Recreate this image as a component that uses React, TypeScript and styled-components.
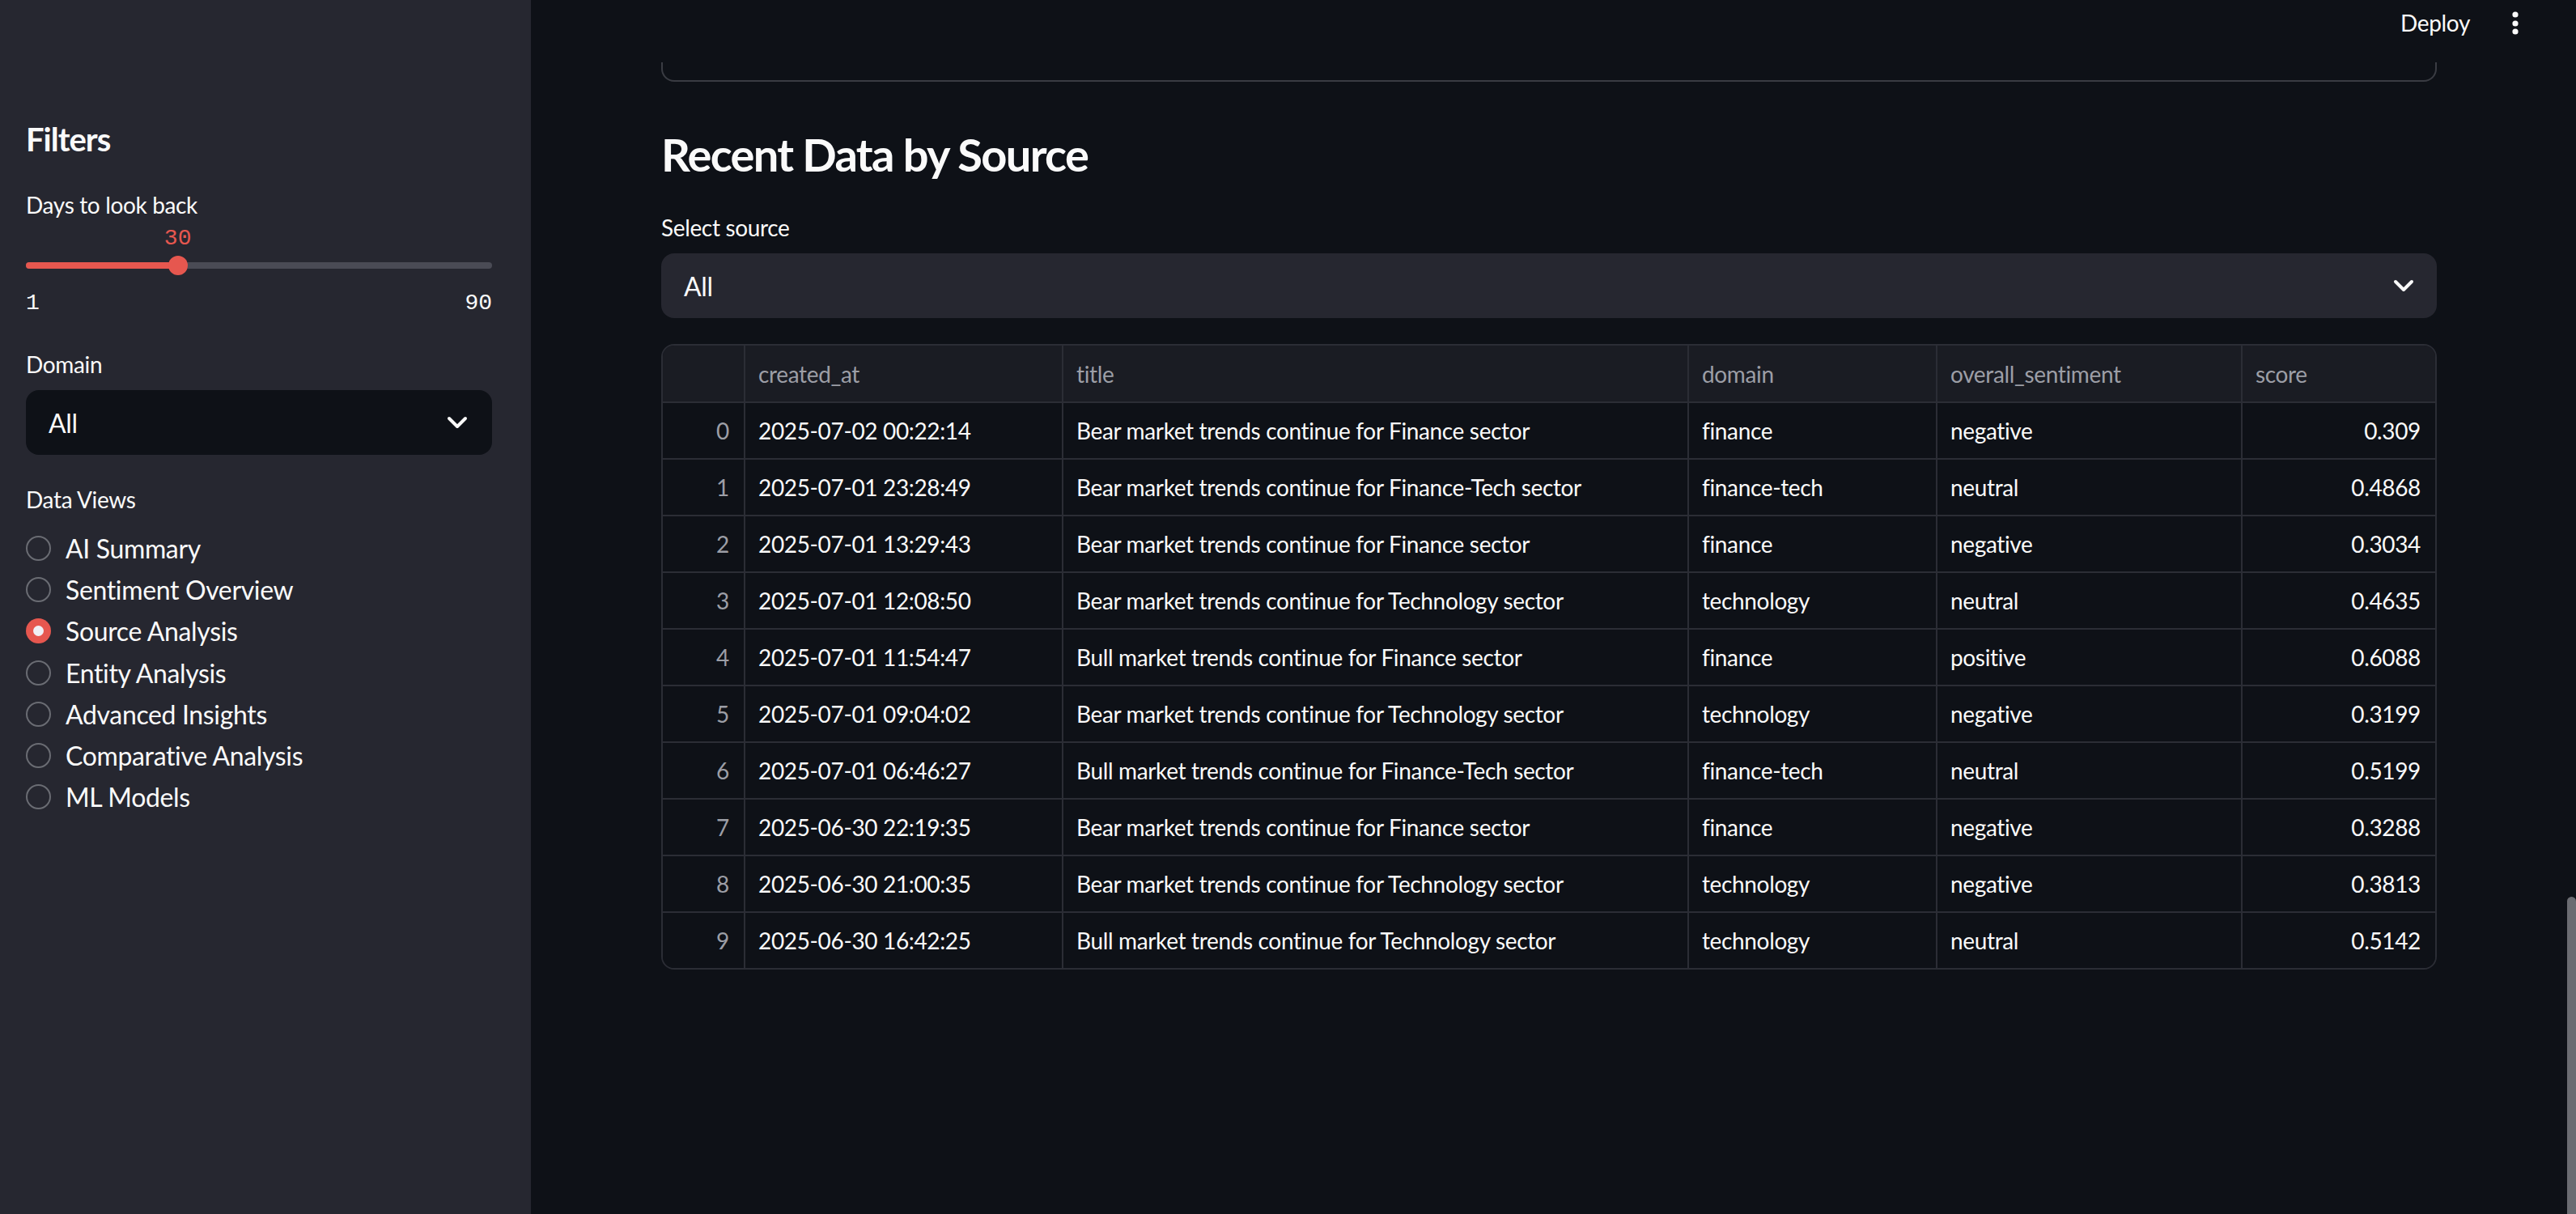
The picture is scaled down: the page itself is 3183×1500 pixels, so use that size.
import React from "react";
import styled, { createGlobalStyle } from "styled-components";

const GlobalStyle = createGlobalStyle`
  html, body { margin: 0; padding: 0; background: #0e1117; }
  body { font-family: Lato, "Noto Sans", sans-serif; color: #fafafa; letter-spacing: -0.022em; }
  * { box-sizing: border-box; }
`;

const Page = styled.div`
  display: flex;
  width: 3183px;
  height: 1500px;
  overflow: hidden;
  position: relative;
  background: #0e1117;
`;

const Sidebar = styled.aside`
  width: 656px;
  flex-shrink: 0;
  background: #262730;
  padding: 148px 48px 0 32px;
  display: flex;
  flex-direction: column;
`;

const SideTitle = styled.h2`
  margin: 0;
  font-size: 40px;
  line-height: 48px;
  font-weight: 700;
  letter-spacing: -0.025em;
  color: #fafafa;
`;

const Label = styled.div<{ $mt: number }>`
  margin-top: ${(p) => p.$mt}px;
  font-size: 28px;
  line-height: 40px;
  color: #fafafa;
`;

const SliderWrap = styled.div`
  margin-top: 6px;
  display: flex;
  flex-direction: column;
`;

const ValueRow = styled.div`
  position: relative;
  height: 32px;
`;

const ThumbValue = styled.span`
  position: absolute;
  top: 0;
  transform: translateX(-50%);
  font-family: "Liberation Mono", "DejaVu Sans Mono", monospace;
  letter-spacing: 0;
  font-size: 28px;
  line-height: 32px;
  color: #e6574f;
`;

const TrackArea = styled.div`
  position: relative;
  height: 34px;
  display: flex;
  align-items: center;
`;

const Track = styled.div`
  position: relative;
  width: 100%;
  height: 8px;
  border-radius: 4px;
  background: #4a4b55;
`;

const TrackFill = styled.div`
  position: absolute;
  left: 0;
  top: 0;
  height: 100%;
  border-radius: 4px;
  background: #e6574f;
`;

const Thumb = styled.div`
  position: absolute;
  top: 50%;
  width: 24px;
  height: 24px;
  border-radius: 50%;
  background: #e6574f;
  transform: translate(-50%, -50%);
`;

const MinMax = styled.div`
  margin-top: 14px;
  display: flex;
  justify-content: space-between;
  font-family: "Liberation Mono", "DejaVu Sans Mono", monospace;
  letter-spacing: 0;
  font-size: 28px;
  line-height: 32px;
  color: #fafafa;
`;

const SelectBox = styled.div<{ $bg: string; $mt: number; $pr: number }>`
  margin-top: ${(p) => p.$mt}px;
  height: 80px;
  border-radius: 16px;
  background: ${(p) => p.$bg};
  display: flex;
  align-items: center;
  justify-content: space-between;
  padding: 0 ${(p) => p.$pr}px 0 28px;
  font-size: 32px;
  color: #fafafa;
`;

const RadioGroup = styled.div`
  margin-top: 15px;
  display: flex;
  flex-direction: column;
`;

const RadioRow = styled.div`
  height: 51.2px;
  display: flex;
  align-items: center;
  gap: 18px;
  font-size: 32px;
  color: #fafafa;
`;

const RadioCircle = styled.span<{ $on: boolean }>`
  width: 31px;
  height: 31px;
  border-radius: 50%;
  flex-shrink: 0;
  display: flex;
  align-items: center;
  justify-content: center;
  border: ${(p) => (p.$on ? "none" : "2px solid #6a6c73")};
  background: ${(p) => (p.$on ? "#e6574f" : "transparent")};
  &::after {
    content: "";
    display: ${(p) => (p.$on ? "block" : "none")};
    width: 13px;
    height: 13px;
    border-radius: 50%;
    background: #f0f0f5;
  }
`;

const Main = styled.main`
  flex: 1;
  display: flex;
  flex-direction: column;
  min-width: 0;
`;

const Header = styled.header`
  height: 77px;
  display: flex;
  justify-content: flex-end;
  align-items: flex-start;
  padding: 8px 55px 0 0;
  gap: 36px;
`;

const DeployText = styled.span`
  font-size: 28px;
  line-height: 40px;
  color: #fafafa;
`;

const KebabButton = styled.span`
  width: 40px;
  height: 40px;
  display: flex;
`;

const Content = styled.div`
  padding: 0 172px 0 161px;
  display: flex;
  flex-direction: column;
`;

const BoxTail = styled.div`
  height: 24px;
  border: 2px solid #3a3c43;
  border-top: none;
  border-radius: 0 0 16px 16px;
`;

const Heading = styled.h3`
  margin: 56px 0 0;
  font-size: 56px;
  line-height: 67px;
  font-weight: 700;
  letter-spacing: -0.03em;
  color: #fafafa;
`;

const Table = styled.div`
  margin-top: 32px;
  border: 2px solid #2b2d35;
  border-radius: 16px;
  overflow: hidden;
  display: grid;
  grid-template-columns: 102px 393px 773px 307px 377px 1fr;
`;

const Cell = styled.div<{ $head?: boolean; $right?: boolean; $muted?: boolean; $last?: boolean; $lastRow?: boolean }>`
  height: ${(p) => (p.$head ? 71 : p.$lastRow ? 68 : 70)}px;
  display: flex;
  align-items: center;
  justify-content: ${(p) => (p.$right ? "flex-end" : "flex-start")};
  padding: ${(p) => (p.$right ? "0 18px 0 16px" : "0 16px")};
  background: ${(p) => (p.$head ? "#1a1c23" : "#0e1117")};
  border-right: ${(p) => (p.$last ? "none" : "2px solid #2b2d35")};
  border-bottom: ${(p) => (p.$lastRow ? "none" : "2px solid #2b2d35")};
  font-size: 28px;
  color: ${(p) => (p.$muted ? "#9c9ea6" : "#fafafa")};
  white-space: nowrap;
  overflow: hidden;
`;

const ScrollThumb = styled.div`
  position: absolute;
  right: 0;
  top: 1108px;
  width: 11px;
  height: 392px;
  border-radius: 6px 6px 0 0;
  background: #6b6c72;
`;

const Chevron = () => (
  <svg width="40" height="40" viewBox="0 0 24 24" fill="none" stroke="#fafafa" strokeWidth="2.4" strokeLinecap="round" strokeLinejoin="round">
    <path d="M6 9l6 6 6-6" />
  </svg>
);

const Kebab = () => (
  <svg width="40" height="40" viewBox="0 0 40 40" fill="#fafafa">
    <circle cx="20" cy="10" r="3.6" />
    <circle cx="20" cy="21" r="3.6" />
    <circle cx="20" cy="31" r="3.6" />
  </svg>
);

const rows: [string, string, string, string, string][] = [
  ["2025-07-02 00:22:14", "Bear market trends continue for Finance sector", "finance", "negative", "0.309"],
  ["2025-07-01 23:28:49", "Bear market trends continue for Finance-Tech sector", "finance-tech", "neutral", "0.4868"],
  ["2025-07-01 13:29:43", "Bear market trends continue for Finance sector", "finance", "negative", "0.3034"],
  ["2025-07-01 12:08:50", "Bear market trends continue for Technology sector", "technology", "neutral", "0.4635"],
  ["2025-07-01 11:54:47", "Bull market trends continue for Finance sector", "finance", "positive", "0.6088"],
  ["2025-07-01 09:04:02", "Bear market trends continue for Technology sector", "technology", "negative", "0.3199"],
  ["2025-07-01 06:46:27", "Bull market trends continue for Finance-Tech sector", "finance-tech", "neutral", "0.5199"],
  ["2025-06-30 22:19:35", "Bear market trends continue for Finance sector", "finance", "negative", "0.3288"],
  ["2025-06-30 21:00:35", "Bear market trends continue for Technology sector", "technology", "negative", "0.3813"],
  ["2025-06-30 16:42:25", "Bull market trends continue for Technology sector", "technology", "neutral", "0.5142"],
];

const views = [
  "AI Summary",
  "Sentiment Overview",
  "Source Analysis",
  "Entity Analysis",
  "Advanced Insights",
  "Comparative Analysis",
  "ML Models",
];

const headers = ["", "created_at", "title", "domain", "overall_sentiment", "score"];

export default function App() {
  const min = 1;
  const max = 90;
  const value = 30;
  const pct = ((value - min) / (max - min)) * 100;

  return (
    <>
      <GlobalStyle />
      <Page>
        <Sidebar>
          <SideTitle>Filters</SideTitle>
          <Label $mt={37}>Days to look back</Label>
          <SliderWrap>
            <ValueRow>
              <ThumbValue style={{ left: `${pct}%` }}>{value}</ThumbValue>
            </ValueRow>
            <TrackArea>
              <Track>
                <TrackFill style={{ width: `${pct}%` }} />
                <Thumb style={{ left: `${pct}%` }} />
              </Track>
            </TrackArea>
            <MinMax>
              <span>{min}</span>
              <span>{max}</span>
            </MinMax>
          </SliderWrap>
          <Label $mt={39}>Domain</Label>
          <SelectBox $bg="#0e1117" $mt={12} $pr={23}>
            <span>All</span>
            <Chevron />
          </SelectBox>
          <Label $mt={35}>Data Views</Label>
          <RadioGroup>
            {views.map((v) => (
              <RadioRow key={v}>
                <RadioCircle $on={v === "Source Analysis"} />
                <span>{v}</span>
              </RadioRow>
            ))}
          </RadioGroup>
        </Sidebar>
        <Main>
          <Header>
            <DeployText>Deploy</DeployText>
            <KebabButton>
              <Kebab />
            </KebabButton>
          </Header>
          <Content>
            <BoxTail />
            <Heading>Recent Data by Source</Heading>
            <Label $mt={37}>Select source</Label>
            <SelectBox $bg="#262730" $mt={12} $pr={21}>
              <span>All</span>
              <Chevron />
            </SelectBox>
            <Table>
              {headers.map((h, i) => (
                <Cell key={`h${i}`} $head $muted $last={i === 5}>
                  {h}
                </Cell>
              ))}
              {rows.map((r, ri) => {
                const lastRow = ri === rows.length - 1;
                return (
                  <React.Fragment key={ri}>
                    <Cell $right $muted $lastRow={lastRow}>{ri}</Cell>
                    <Cell $lastRow={lastRow}>{r[0]}</Cell>
                    <Cell $lastRow={lastRow}>{r[1]}</Cell>
                    <Cell $lastRow={lastRow}>{r[2]}</Cell>
                    <Cell $lastRow={lastRow}>{r[3]}</Cell>
                    <Cell $right $last $lastRow={lastRow}>{r[4]}</Cell>
                  </React.Fragment>
                );
              })}
            </Table>
          </Content>
        </Main>
        <ScrollThumb />
      </Page>
    </>
  );
}
